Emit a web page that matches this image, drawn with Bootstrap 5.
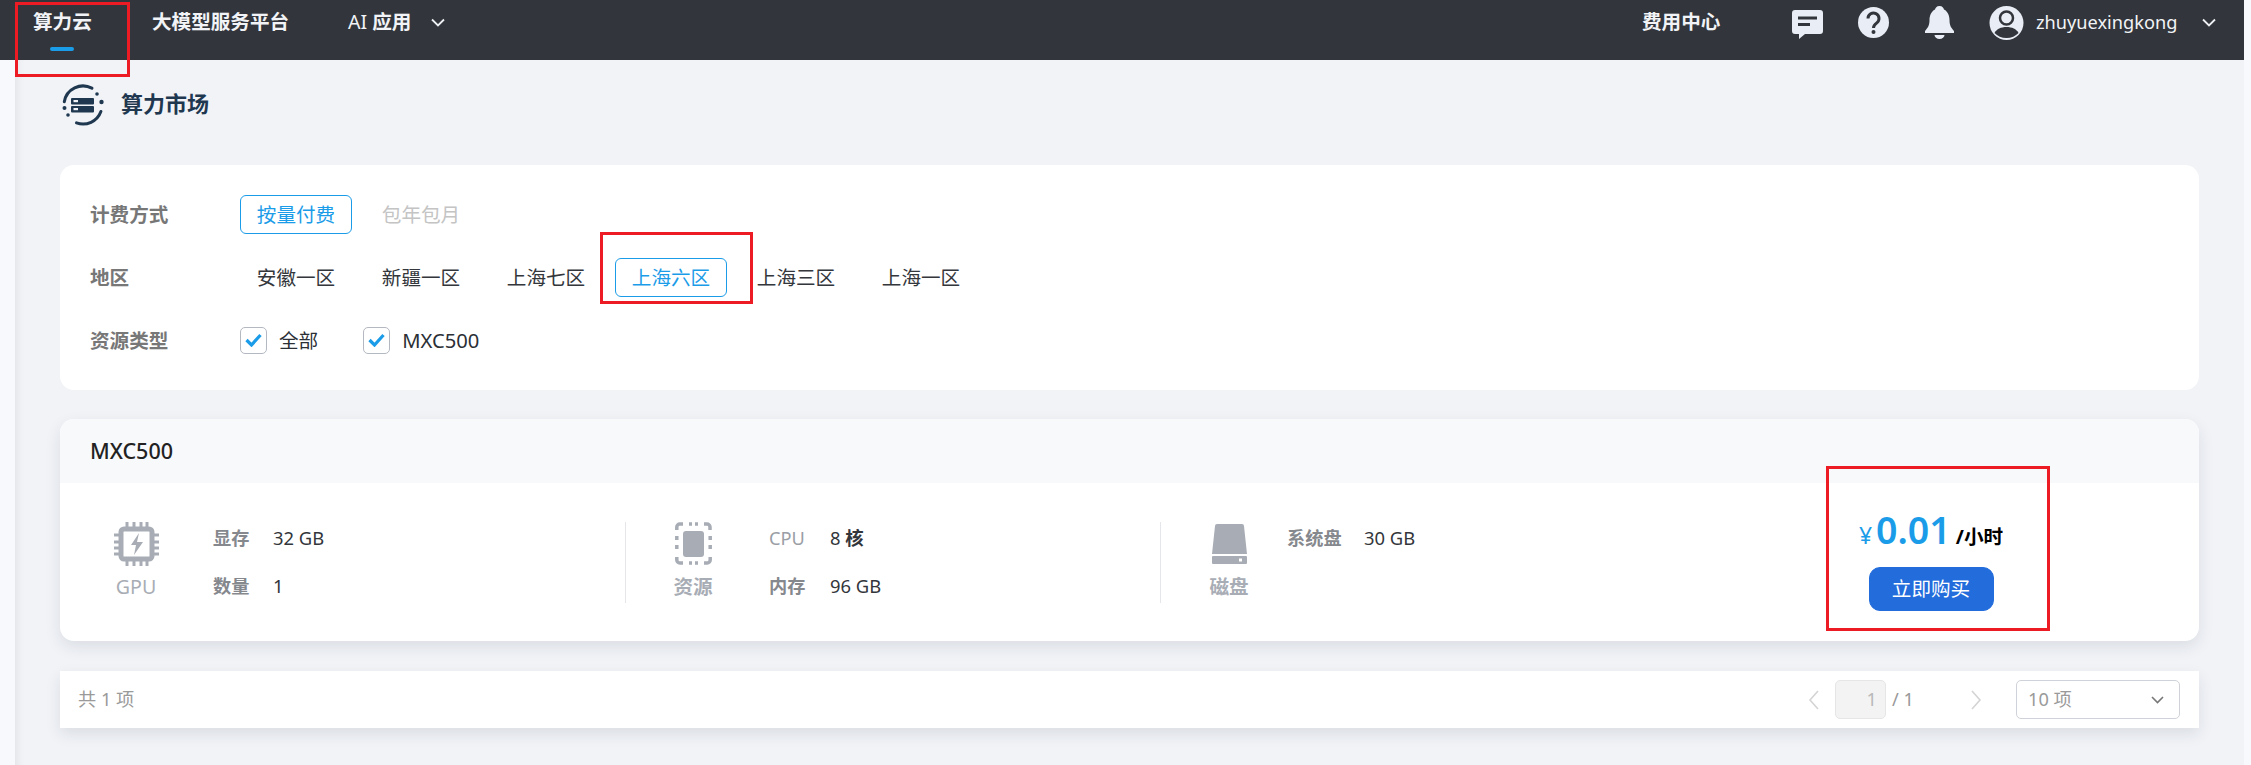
<!DOCTYPE html>
<html lang="zh-CN">
<head>
<meta charset="utf-8">
<title>算力市场</title>
<link href="https://cdn.jsdelivr.net/npm/bootstrap@5.3.0/dist/css/bootstrap.min.css" rel="stylesheet">
<style>
html,body{height:765px;overflow:hidden}
body{background:#f8f9fd;font-family:"Noto Sans","Noto Sans CJK SC",sans-serif;font-size:19.6px;color:#2b2f36;position:relative}
.topbar{height:60px;margin-right:7px;background:#32353b;color:#f1f3f6;padding:0 28px 0 33px;font-weight:700;align-items:flex-start}
.topitem{height:44px;display:flex;align-items:center;line-height:1;white-space:nowrap}
.topitem-active{position:relative;width:59px}
.topitem-active::after{content:"";position:absolute;left:17px;top:47px;width:24px;height:4px;border-radius:2px;background:#1b9ce8}
.top-second{margin-left:60px;width:136px}
.top-third{margin-left:60px;font-weight:700}
.top-third .ai{font-weight:400}
.top-chev{margin-left:20px}
.top-fee{margin-left:auto;width:77px}
.top-comment{margin-left:73px;margin-top:10px;display:block}
.top-help{margin-left:35px;margin-top:7px;display:block}
.top-bell{margin-left:36px;margin-top:6px;display:block}
.top-user{margin-left:35px;margin-top:6px;display:block}
.top-name{margin-left:12px;font-weight:400;font-size:18.2px;width:142px}
.top-chev2{margin-left:24px}
.workspace{margin:0 7px 0 15px;height:705px;background:#f1f3f7;padding:24px 45px 0;box-shadow:inset 9px 0 9px -7px rgba(0,0,0,.07)}
.page-title{height:42px;margin-bottom:39px;padding-left:2px;gap:17px;font-size:22px;font-weight:700;color:#1f3850}
.page-title span{margin-top:-3px}
.filter-box{height:225px;background:#fff;border:0;border-radius:14px;padding:30px;gap:24px}
.filter-row{height:39px}
.filter-label{width:150px;color:#777;font-weight:700}
.opt-list{gap:13px}
.opt{width:112px;height:39px;padding:0;border:1px solid transparent;border-radius:6px;font-size:19.6px;line-height:37px;color:#33363b;text-align:center;background:none}
.opt-on{border-color:#1b9ce8;color:#1b9ce8}
.opt-off{color:#c4c4c4}
.chk{display:flex;align-items:center;gap:12px;margin-right:45px}
.chk-latin{font-size:20.2px}
.chk-box{width:27px;height:27px;border:1px solid #b4b8c0;border-radius:5px;display:flex;align-items:center;justify-content:center;background:#fff}
.product{margin-top:29px;height:222px;border:0;border-radius:14px;background:#fff;box-shadow:0 6px 16px rgba(30,40,60,.1);overflow:hidden}
.product-head{height:64px;background:#f8f9fb;border:0;border-radius:0;padding:0 30px;font-weight:500;font-size:21.5px;color:#222;display:flex;align-items:center}
.product-main{height:158px;padding:39px 0 0}
.spec-group{height:81px;display:flex}
.group-a{width:565px;padding-left:30px}
.group-b{width:535px;border-left:1px solid #e4e6ea;padding-left:21px}
.group-c{border-left:1px solid #e4e6ea;padding-left:22px;width:500px}
.kind{width:92px;display:flex;flex-direction:column;align-items:center;color:#a8adb5;flex:none}
.kind svg{display:block;height:44px}
.kind span{line-height:32px;margin-top:5px}
.kind-bold{font-weight:700}
.spec-list{display:flex;flex-direction:column;gap:16px}
.spec-a{margin-left:31px}
.spec-b{margin-left:30px}
.spec-c{margin-left:12px}
.spec-item{height:32px;line-height:32px;font-size:18.4px;display:flex;color:#33363b}
.spec-key{color:#85888d;font-weight:700;font-size:18.2px}
.key-a{width:60px}.key-b{width:61px}.key-c{width:77px}
.key-cpu{font-weight:400;color:#9a9ea5}
.price-box{width:220px;margin-left:auto;margin-right:158px;align-self:flex-end;margin-bottom:30px;text-align:center;display:flex;flex-direction:column;align-items:center}
.price-line{height:48px;line-height:38px;white-space:nowrap;color:#000;font-weight:700;margin-bottom:8px}
.price-cur{color:#1b9ce8;font-weight:400;font-size:23px}
.price-num{color:#1b9ce8;font-size:37.5px;font-weight:600;margin:0 5px 0 4px}
.buy-btn{width:125px;height:44px;padding:0;background:#226cdc;border-color:#226cdc;border-radius:11px;color:#fff;font-size:19.6px}
.pager{margin-top:30px;height:57px;background:#fff;padding:0 19px 0 18px;box-shadow:0 6px 14px rgba(30,40,60,.1);color:#9a9a9a;font-size:18.2px}
.pager-arrow{display:block}
.page-cur{width:51px;height:39px;background:#f3f3f3;border:1px solid #e6e6e6;border-radius:5px;color:#b9b9b9;text-align:right;padding-right:8px;line-height:37px;margin:0 6px 0 16px}
.page-total{width:79px;color:#999}
.page-size{width:164px;height:39px;border:1px solid #cfd2d8;border-radius:5px;margin-left:34px;padding:0 15px 0 11px;color:#9a9a9a}
.mark-red{position:absolute;border:3px solid #ed1c24;pointer-events:none}
.mark-a{left:15px;top:2px;width:115px;height:75px}
.mark-b{left:600px;top:232px;width:153px;height:72px}
.mark-c{left:1826px;top:466px;width:224px;height:165px}
</style>
</head>
<body>
<nav class="topbar d-flex">
  <div class="topitem topitem-active">算力云</div>
  <div class="topitem top-second">大模型服务平台</div>
  <div class="topitem top-third"><span class="ai">AI&nbsp;</span>应用</div>
  <div class="topitem top-chev"><svg width="14" height="9" viewBox="0 0 14 9"><path d="M1 1.500l6 6 6-6" fill="none" stroke="#eef0f4" stroke-width="1.800"/></svg></div>
  <div class="topitem top-fee">费用中心</div>
  <svg class="top-comment" width="31" height="29" viewBox="0 0 31 29"><path d="M3 0H28a3 3 0 0 1 3 3V21a3 3 0 0 1-3 3H13L7 29V24H3a3 3 0 0 1-3-3V3a3 3 0 0 1 3-3z" fill="#e9eef6"/><path d="M6 8h19M6 14.500h12" stroke="#32353b" stroke-width="3" fill="none"/></svg>
  <svg class="top-help" width="31" height="31" viewBox="0 0 31 31"><circle cx="15.500" cy="15.500" r="15.500" fill="#e9eef6"/><path d="M10 11.500a5.500 5.500 0 1 1 8.800 4.400c-2 1.500-3.300 2.500-3.300 5" fill="none" stroke="#32353b" stroke-width="3"/><circle cx="15.500" cy="25" r="2" fill="#32353b"/></svg>
  <svg class="top-bell" width="29" height="33" viewBox="0 0 29 33"><path d="M14.500 0c3 0 4 2 4.500 3.500C23 5.500 24.500 10 24.500 14c0 6 2 8 4.500 11v2H0v-2c2.500-3 4.500-5 4.500-11 0-4 1.500-8.500 5.500-10.500C10.500 2 11.500 0 14.500 0z" fill="#e9eef6"/><path d="M9.500 29h10a5 4 0 0 1-10 0z" fill="#e9eef6"/></svg>
  <svg class="top-user" width="35" height="34" viewBox="0 0 35 34"><circle cx="17.500" cy="17" r="17" fill="#e9eef6"/><circle cx="17.500" cy="12" r="6.500" fill="none" stroke="#32353b" stroke-width="2.500"/><path d="M5.500 27c2-4 6.500-6 12-6s10 2 12 6c-3 3-7 5-12 5s-9-2-12-5z" fill="#32353b"/></svg>
  <div class="topitem top-name">zhuyuexingkong</div>
  <div class="topitem top-chev2"><svg width="14" height="9" viewBox="0 0 14 9"><path d="M1 1.500l6 6 6-6" fill="none" stroke="#eef0f4" stroke-width="1.800"/></svg></div>
</nav>

<main class="workspace">
  <div class="page-title d-flex align-items-center">
    <svg width="42" height="42" viewBox="0 0 42 42"><g fill="none" stroke="#1f3850" stroke-width="3" stroke-linecap="round"><path d="M2.300 17.700A19 19 0 0 1 29.900 4.200"/><path d="M38.900 27.500A19 19 0 0 1 14.500 38.900"/></g><g fill="#1f3850"><circle cx="35" cy="10" r="1.800"/><circle cx="39.500" cy="18" r="2.200"/><circle cx="2.500" cy="24" r="2"/><circle cx="6" cy="31" r="1.800"/><rect x="9" y="14" width="23" height="6.500" rx="1"/><rect x="9" y="22" width="23" height="6.500" rx="1"/></g><rect x="11.500" y="16" width="4.500" height="2.200" fill="#f1f3f7"/><rect x="11.500" y="24" width="4.500" height="2.200" fill="#f1f3f7"/></svg>
    <span>算力市场</span>
  </div>

  <section class="card filter-box">
    <div class="filter-row d-flex align-items-center">
      <div class="filter-label">计费方式</div>
      <div class="opt-list d-flex">
        <button type="button" class="opt opt-on">按量付费</button>
        <button type="button" class="opt opt-off">包年包月</button>
      </div>
    </div>
    <div class="filter-row d-flex align-items-center">
      <div class="filter-label">地区</div>
      <div class="opt-list d-flex">
        <button type="button" class="opt">安徽一区</button>
        <button type="button" class="opt">新疆一区</button>
        <button type="button" class="opt">上海七区</button>
        <button type="button" class="opt opt-on">上海六区</button>
        <button type="button" class="opt">上海三区</button>
        <button type="button" class="opt">上海一区</button>
      </div>
    </div>
    <div class="filter-row d-flex align-items-center">
      <div class="filter-label">资源类型</div>
      <label class="chk"><span class="chk-box"><svg width="17" height="14" viewBox="0 0 17 14"><path d="M1.500 7l5 5 9-10" fill="none" stroke="#1b9ce8" stroke-width="3.200"/></svg></span>全部</label>
      <label class="chk chk-latin"><span class="chk-box"><svg width="17" height="14" viewBox="0 0 17 14"><path d="M1.500 7l5 5 9-10" fill="none" stroke="#1b9ce8" stroke-width="3.200"/></svg></span>MXC500</label>
    </div>
  </section>

  <section class="card product">
    <div class="card-header product-head">MXC500</div>
    <div class="product-main d-flex">
      <div class="spec-group group-a">
        <div class="kind">
          <svg width="45" height="44" viewBox="0 0 45 44"><g stroke="#a8adb5" stroke-width="3" fill="none"><path d="M13 0v6M20 0v6M27 0v6M33 0v6M13 38v6M20 38v6M27 38v6M33 38v6M0 13h6M0 20h6M0 26h6M0 32h6M39 13h6M39 20h6M39 26h6M39 32h6"/><rect x="7" y="7" width="31" height="30" rx="3" stroke-width="5"/></g><path d="M25 11l-8 12h5l-2 10 9-13h-6z" fill="#a8adb5"/></svg>
          <span>GPU</span>
        </div>
        <div class="spec-list spec-a">
          <div class="spec-item"><span class="spec-key key-a">显存</span><span>32 GB</span></div>
          <div class="spec-item"><span class="spec-key key-a">数量</span><span>1</span></div>
        </div>
      </div>
      <div class="spec-group group-b">
        <div class="kind kind-bold">
          <svg width="37" height="44" viewBox="0 0 37 44"><g fill="none" stroke="#a8adb5" stroke-width="3.500"><path d="M1.800 8V5a3 3 0 0 1 3-3H8M29 2h3a3 3 0 0 1 3 3v3M35.200 35v3a3 3 0 0 1-3 3H29M8 41H4.800a3 3 0 0 1-3-3v-3M14 2h3M20 2h3M14 41h3M20 41h3M1.800 14v4M1.800 23v4M35.200 14v4M35.200 23v4"/></g><rect x="8" y="9" width="21" height="26" rx="3" fill="#a8adb5"/></svg>
          <span>资源</span>
        </div>
        <div class="spec-list spec-b">
          <div class="spec-item"><span class="spec-key key-b key-cpu">CPU</span><span>8 <b>核</b></span></div>
          <div class="spec-item"><span class="spec-key key-b">内存</span><span>96 GB</span></div>
        </div>
      </div>
      <div class="spec-group group-c">
        <div class="kind kind-bold">
          <svg width="35" height="40" viewBox="0 0 35 40"><path d="M5 0H30a2 2 0 0 1 2 2L35 30H0L3 2a2 2 0 0 1 2-2z" fill="#a8adb5"/><rect y="32" width="35" height="8" rx="1" fill="#a8adb5"/><rect x="27" y="34.500" width="3" height="3" fill="#fff"/></svg>
          <span>磁盘</span>
        </div>
        <div class="spec-list spec-c">
          <div class="spec-item"><span class="spec-key key-c">系统盘</span><span>30 GB</span></div>
        </div>
      </div>
      <div class="price-box">
        <div class="price-line"><span class="price-cur">¥</span><span class="price-num">0.01</span>/小时</div>
        <button type="button" class="btn buy-btn">立即购买</button>
      </div>
    </div>
  </section>

  <section class="pager d-flex align-items-center">
    <span>共 1 项</span>
    <svg class="pager-arrow ms-auto" width="11" height="20" viewBox="0 0 11 20"><path d="M10 1L2 10l8 9" fill="none" stroke="#d4d4d4" stroke-width="1.600"/></svg>
    <span class="page-cur">1</span>
    <span class="page-total">/ 1</span>
    <svg class="pager-arrow" width="11" height="20" viewBox="0 0 11 20"><path d="M1 1l8 9-8 9" fill="none" stroke="#d4d4d4" stroke-width="1.600"/></svg>
    <div class="page-size d-flex align-items-center justify-content-between"><span>10 项</span><svg width="13" height="8" viewBox="0 0 13 8"><path d="M1 1l5.500 5.500L12 1" fill="none" stroke="#777" stroke-width="1.600"/></svg></div>
  </section>
</main>

<div class="mark-red mark-a"></div>
<div class="mark-red mark-b"></div>
<div class="mark-red mark-c"></div>
<script src="https://cdn.jsdelivr.net/npm/bootstrap@5.3.0/dist/js/bootstrap.bundle.min.js"></script>
</body>
</html>
